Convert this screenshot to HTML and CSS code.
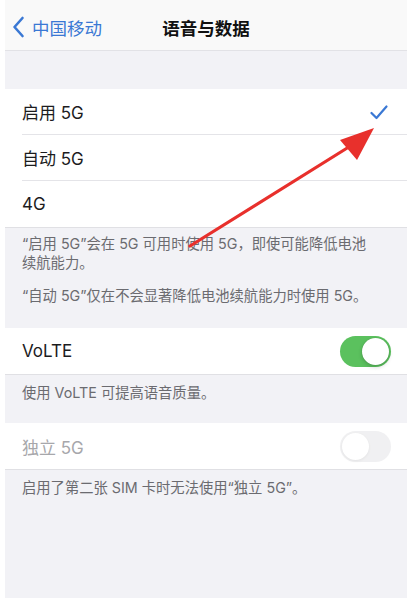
FILE: index.html
```html
<!DOCTYPE html>
<html lang="zh-CN">
<head>
<meta charset="utf-8">
<link rel="stylesheet" href="styles.css">
</head>
<body>
<div class="screen">
  <header class="navbar">
    <div class="back">
      <svg class="chev" width="13" height="22" viewBox="0 0 13 22"><path d="M10.5 2 L2.5 11 L10.5 20" fill="none" stroke="#3a78d4" stroke-width="2.6" stroke-linecap="round" stroke-linejoin="round"/></svg>
      <span>中国移动</span>
    </div>
    <div class="title">语音与数据</div>
  </header>

  <div class="spacer"></div>

  <ul class="group">
    <li class="row"><span>启用 5G</span>
      <svg class="check" width="18" height="15" viewBox="0 0 18 15"><path d="M1.5 8 L6.5 13 L16.5 1.5" fill="none" stroke="#3a78d4" stroke-width="2.2" stroke-linecap="round" stroke-linejoin="round"/></svg>
    </li>
    <li class="row"><span>自动 5G</span></li>
    <li class="row last"><span>4G</span></li>
  </ul>
  <div class="foot f1">
    <p>“启用 5G”会在 5G 可用时使用 5G，即使可能降低电池<br>续航能力。</p>
    <p>“自动 5G”仅在不会显著降低电池续航能力时使用 5G。</p>
  </div>

  <ul class="group">
    <li class="row last"><span>VoLTE</span><span class="toggle on"><i></i></span></li>
  </ul>
  <div class="foot f2"><p>使用 VoLTE 可提高语音质量。</p></div>

  <ul class="group">
    <li class="row last disabled"><span>独立 5G</span><span class="toggle off"><i></i></span></li>
  </ul>
  <div class="foot f3"><p>启用了第二张 SIM 卡时无法使用“独立 5G”。</p></div>

  <svg class="arrow" width="411" height="600" viewBox="0 0 411 600">
    <line x1="190" y1="246" x2="352" y2="145" stroke="#e8302c" stroke-width="3.2" stroke-linecap="round"/>
    <polygon points="374,128 340,140 357,160" fill="#e8302c"/>
  </svg>
</div>
</body>
</html>
```

FILE: styles.css
```css
* { box-sizing: border-box; }
html, body { margin: 0; padding: 0; background: #ffffff; }
body {
  font-family: "Inter", "Noto Sans CJK SC", sans-serif;
  color: #1c1c1e;
  width: 411px;
  height: 600px;
  overflow: hidden;
}
.screen {
  position: relative;
  margin: 0 4px 0 5px;
  height: 598px;
  background: #f2f2f6;
}
.navbar {
  height: 51px;
  background: #f9f9f9;
  border-bottom: 1px solid #e2e2e6;
  display: flex;
  align-items: center;
  padding-top: 4px;
  position: relative;
}
.back {
  display: flex;
  align-items: center;
  gap: 7px;
  padding-left: 7px;
  color: #3a78d4;
  font-size: 17.5px;
  font-family: "Noto Sans CJK SC", sans-serif;
}
.chev { display: block; }
.title {
  position: absolute;
  left: 0; right: 0;
  text-align: center;
  font-family: "Noto Sans CJK SC", sans-serif;
  font-weight: 600;
  font-size: 17.5px;
  color: #111;
  pointer-events: none;
}
.spacer { height: 38px; }
.group {
  list-style: none;
  margin: 0;
  padding: 0 0 0 17px;
  background: #ffffff;
  border-bottom: 1px solid #e0e0e4;
}
.row {
  height: 46px;
  display: flex;
  align-items: center;
  justify-content: space-between;
  padding-right: 16px;
  border-bottom: 1px solid #e4e4e8;
  font-size: 17px;
  font-family: "Inter", "Noto Sans CJK SC", sans-serif;
}
.row.last { border-bottom: none; }
.row.disabled > span:first-child { color: #a7a7ab; }
.check { margin-right: 3px; margin-top: 2px; }
.foot {
  padding: 6px 10px 0 17px;
  font-size: 14.3px;
  line-height: 19px;
  color: #6b6b70;
  font-family: "Inter", "Noto Sans CJK SC", sans-serif;
}
.foot p { margin: 0 0 14px; }
.f1 { height: 100px; }
.f2 { height: 48px; padding-top: 8px; }
.f3 { padding-top: 8px; }
.toggle {
  width: 51px;
  height: 31px;
  border-radius: 16px;
  position: relative;
  display: block;
}
.toggle i {
  position: absolute;
  top: 2px;
  width: 27px;
  height: 27px;
  border-radius: 50%;
  background: #fff;
  box-shadow: 0 2px 4px rgba(0,0,0,0.18), 0 0 1px rgba(0,0,0,0.2);
}
.toggle.on { background: #5bc15e; }
.toggle.on i { right: 2px; }
.toggle.off { background: #ececee; opacity: 0.75; }
.toggle.off i { left: 2px; box-shadow: 0 1px 3px rgba(0,0,0,0.08); }
.arrow {
  position: absolute;
  left: -5px;
  top: 0;
  pointer-events: none;
}
```
